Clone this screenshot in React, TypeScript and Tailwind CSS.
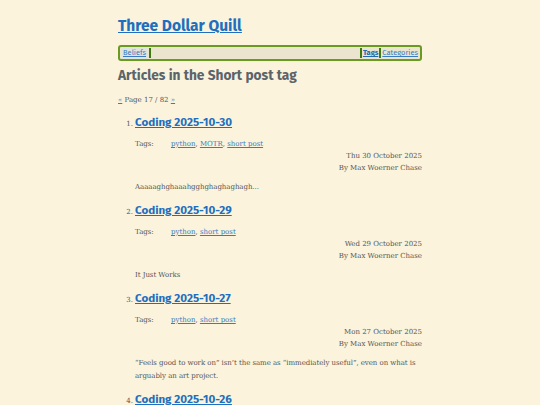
import React from 'react';

type Post = {
  title: string;
  tags: string[];
  date: string;
  excerpt: string;
};

const posts: Post[] = [
  { title: 'Coding 2025-10-30', tags: ['python', 'MOTR', 'short post'], date: 'Thu 30 October 2025', excerpt: 'Aaaaaghghaaahgghghaghaghagh...' },
  { title: 'Coding 2025-10-29', tags: ['python', 'short post'], date: 'Wed 29 October 2025', excerpt: 'It Just Works' },
  {
    title: 'Coding 2025-10-27',
    tags: ['python', 'short post'],
    date: 'Mon 27 October 2025',
    excerpt: '\u201cFeels good to work on\u201d isn\u2019t the same as \u201cimmediately useful\u201d, even on what is arguably an art project.',
  },
  { title: 'Coding 2025-10-26', tags: ['python', 'short post'], date: 'Sun 26 October 2025', excerpt: 'More of the same.' },
];

const sans = "font-['Fira_Sans','Lato','Noto_Sans',sans-serif]";
const serif = "font-['DejaVu_Serif','Liberation_Serif',serif]";

const App: React.FC = () => {
  return (
    <div className="h-[405px] bg-[#fbf3dc] overflow-hidden">
      <div className="w-[304px] mx-auto pt-[14px]">
        <h1 className={`${sans} text-[15.5px] leading-[24px] font-bold text-[#1e6fbf] underline`}>
          <a href="#">Three Dollar Quill</a>
        </h1>

        <nav className={`${sans} mt-[7px] flex items-center h-[16px] border-2 border-[#6b9a22] rounded-[3px] bg-[#ebe4cf] text-[7.5px] px-[2px]`}>
          <a href="#" className="text-[#3a7cc0] underline bg-[#dfe4df] px-[1px]">Beliefs</a>
          <span className="w-[2px] h-[10px] bg-[#3d7a12] ml-[2px]" />
          <div className="flex-1" />
          <span className="w-[2px] h-[10px] bg-[#3d7a12] mr-[1px]" />
          <a href="#" className="text-[#2468ad] font-bold underline">Tags</a>
          <span className="w-[2px] h-[10px] bg-[#3d7a12] mx-[1px]" />
          <a href="#" className="text-[#3a7cc0] underline">Categories</a>
        </nav>

        <h2 className={`${sans} mt-[6px] text-[13.7px] leading-[18px] font-bold text-[#5a646b]`}>Articles in the Short post tag</h2>

        <p className={`${serif} mt-[9px] text-[7px] leading-[12px] text-[#555]`}>
          <a href="#" className="text-[#3a7cc0] underline">&laquo;</a> Page 17 / 82{' '}
          <a href="#" className="text-[#3a7cc0] underline">&raquo;</a>
        </p>

        <ol className="mt-[6px] flex flex-col">
          {posts.map((p, i) => (
            <li key={p.title} className="flex flex-col pb-[6px]">
              <div className="flex items-baseline">
                <span className={`${serif} w-[17px] text-right pr-[2px] text-[7px] text-[#555]`}>{i + 1}.</span>
                <a href="#" className={`${sans} text-[11.6px] leading-[20px] font-bold text-[#1e6fbf] underline`}>{p.title}</a>
              </div>
              <div className={`${serif} pl-[17px] text-[7px] text-[#555]`}>
                <div className="mt-[6px] flex leading-[12px]">
                  <span className="w-[36px]">Tags:</span>
                  <span>
                    {p.tags.map((t, j) => (
                      <React.Fragment key={t}>
                        <a href="#" className="text-[#3a7cc0] underline">{t}</a>
                        {j < p.tags.length - 1 ? ', ' : ''}
                      </React.Fragment>
                    ))}
                  </span>
                </div>
                <div className="text-right leading-[12px]">{p.date}</div>
                <div className="text-right leading-[12px]">By Max Woerner Chase</div>
                <p className="mt-[7px] leading-[13px] tracking-[-0.05px]">{p.excerpt}</p>
              </div>
            </li>
          ))}
        </ol>
      </div>
    </div>
  );
};

export default App;
